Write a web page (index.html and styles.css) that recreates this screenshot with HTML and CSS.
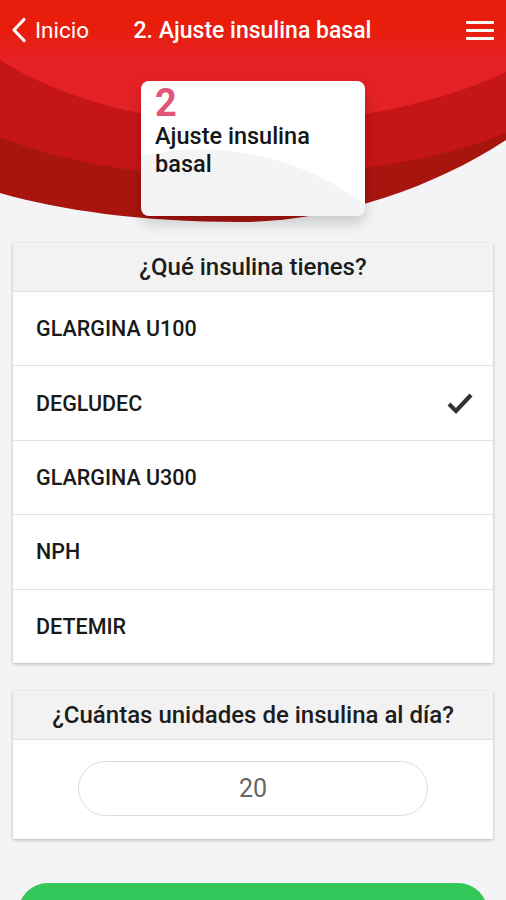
FILE: index.html
```html
<!DOCTYPE html>
<html lang="es">
<head>
    <meta charset="UTF-8">
    <meta name="viewport" content="width=device-width, initial-scale=1.0">
    <title>Ajuste insulina basal</title>
    <link rel="stylesheet" href="styles.css">
</head>
<body>
    <div class="hero">
        <svg class="hero-bg" viewBox="0 0 506 230" preserveAspectRatio="none">
            <defs>
                <linearGradient id="topRed" x1="0" y1="0" x2="0" y2="1">
                    <stop offset="0" stop-color="#e91d0b"/>
                    <stop offset="0.22" stop-color="#e91d0b"/>
                    <stop offset="0.5" stop-color="#e42225"/>
                </linearGradient>
            </defs>
            <path d="M0,0 H506 V140 C430,190 330,222 240,222 C140,222 60,210 0,193 Z" fill="#a8150f"/>
            <path d="M0,0 H506 V133 C440,160 340,176 250,177 C150,178 60,162 0,137 Z" fill="#c41517"/>
            <path d="M0,0 H506 V72 C430,108 330,124 250,124 C150,124 60,98 0,60 Z" fill="url(#topRed)"/>
        </svg>

        <header class="nav">
            <a class="nav-back" href="#">
                <svg width="16" height="26" viewBox="0 0 16 26">
                    <path d="M13 2.5 L3 13 L13 23.5" fill="none" stroke="#fff" stroke-width="3.2" stroke-linecap="round" stroke-linejoin="round"/>
                </svg>
                <span>Inicio</span>
            </a>
            <h1 class="nav-title">2. Ajuste insulina basal</h1>
            <button class="nav-menu" aria-label="Menú">
                <span></span><span></span><span></span>
            </button>
        </header>

        <div class="step-card">
            <div class="step-num">2</div>
            <div class="step-name">Ajuste insulina basal</div>
        </div>
    </div>

    <main class="content">
        <section class="panel">
            <h2 class="panel-head">¿Qué insulina tienes?</h2>
            <ul class="options">
                <li class="option">GLARGINA U100</li>
                <li class="option selected">
                    DEGLUDEC
                    <svg class="check" width="28" height="24" viewBox="0 0 28 24">
                        <path d="M3 13 L10 20 L25 4" fill="none" stroke="#333" stroke-width="4.2" stroke-linejoin="miter"/>
                    </svg>
                </li>
                <li class="option">GLARGINA U300</li>
                <li class="option">NPH</li>
                <li class="option">DETEMIR</li>
            </ul>
        </section>

        <section class="panel">
            <h2 class="panel-head">¿Cuántas unidades de insulina al día?</h2>
            <div class="panel-body">
                <input class="units" type="text" value="20">
            </div>
        </section>

        <button class="next-btn" aria-label="Calcular"></button>
    </main>
</body>
</html>
```

FILE: styles.css
```css
body {
    margin: 0;
    background: #f4f4f6;
    font-family: Roboto, "Noto Sans", Arial, sans-serif;
    color: #1d1d1d;
    overflow: hidden;
}
.hero {
    position: relative;
    padding-bottom: 27px;
}
.hero-bg {
    position: absolute;
    top: 0;
    left: 0;
    width: 100%;
    height: 230px;
    z-index: 0;
}
.nav {
    position: relative;
    display: grid;
    grid-template-columns: 1fr auto 1fr;
    align-items: center;
    height: 60px;
    padding: 0 12px 0 11px;
    color: white;
}
.nav-back {
    display: flex;
    align-items: center;
    gap: 8px;
    color: white;
    text-decoration: none;
    font-size: 22.5px;
}
.nav-title {
    margin: 0;
    font-size: 23px;
    font-weight: 500;
}
.nav-menu {
    justify-self: end;
    display: flex;
    flex-direction: column;
    gap: 5px;
    width: 28px;
    padding: 0;
    background: none;
    border: none;
}
.nav-menu span {
    display: block;
    height: 3px;
    background: white;
    border-radius: 1px;
}
.step-card {
    position: relative;
    width: 224px;
    height: 135px;
    box-sizing: border-box;
    margin: 21px auto 0;
    padding: 3px 14px;
    border-radius: 8px;
    background: radial-gradient(circle 272px at 60px 340px, #f4f4f4 99.6%, white 100%);
    box-shadow: 0 7px 14px rgba(0,0,0,0.18);
}
.step-num {
    font-size: 38px;
    font-weight: 700;
    line-height: 38px;
    color: #e2567c;
}
.step-name {
    font-size: 23.5px;
    font-weight: 500;
    line-height: 28px;
    color: #161616;
    width: 190px;
}
.content {
    padding: 0 13px;
}
.panel {
    background: white;
    box-shadow: 0 1px 3px rgba(0,0,0,0.28);
    margin-bottom: 28px;
}
.panel-head {
    margin: 0;
    height: 48px;
    line-height: 48px;
    background: #f2f2f2;
    border-bottom: 1px solid #e2e2e2;
    text-align: center;
    font-size: 24px;
    font-weight: 500;
    color: #1d1d1d;
}
.options {
    list-style: none;
    margin: 0;
    padding: 0;
}
.option {
    display: flex;
    align-items: center;
    justify-content: space-between;
    height: 73.4px;
    padding: 0 19px 0 23px;
    border-bottom: 1px solid #e2e2e2;
    font-size: 21.5px;
    font-weight: 500;
    color: #1a1a1a;
}
.option:last-child {
    border-bottom: none;
}
.panel-body {
    display: flex;
    justify-content: center;
    padding: 21px 0 23px;
}
.units {
    width: 350px;
    height: 55px;
    box-sizing: border-box;
    border: 1px solid #dcdcdc;
    border-radius: 28px;
    text-align: center;
    font-family: inherit;
    font-size: 25px;
    color: #666;
    background: white;
    outline: none;
}
.next-btn {
    display: block;
    width: 470px;
    height: 60px;
    margin: 44px auto 0;
    border: none;
    border-radius: 30px;
    background: #34c759;
}
```
